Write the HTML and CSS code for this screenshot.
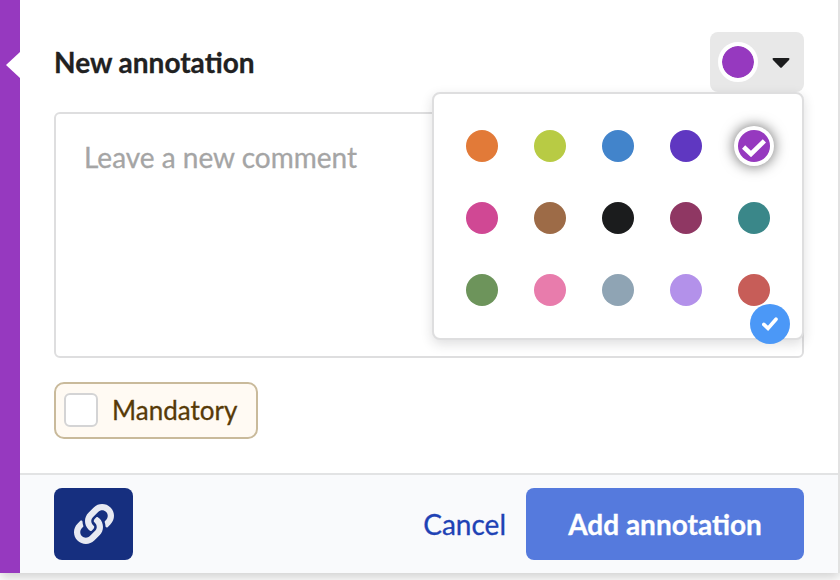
FILE: index.html
```html
<!DOCTYPE html>
<html lang="en">
<head>
<meta charset="utf-8">
<title>New annotation</title>
<link rel="stylesheet" href="styles.css">
</head>
<body>
<main class="card">
  <div class="main">
    <header class="header">
      <h1 class="title">New annotation</h1>
      <div class="picker">
        <button class="picker-toggle" aria-label="Colour">
          <span class="current"></span>
          <svg class="caret" width="18" height="10" viewBox="0 0 18 10"><path d="M1.6 0H16.4Q18.2.2 17 1.9L10 9.2Q9 10.2 8 9.2L1 1.9Q-.2.2 1.6 0Z" fill="#1b1c1d"/></svg>
        </button>
        <div class="palette">
          <span class="dot orange"></span>
          <span class="dot lime"></span>
          <span class="dot blue"></span>
          <span class="dot indigo"></span>
          <span class="dot purple selected"><svg width="24" height="18" viewBox="0 0 24 18"><path d="M1.6 8L9 15L22.4 1.8" fill="none" stroke="#fff" stroke-width="4.6"/></svg></span>
          <span class="dot magenta"></span>
          <span class="dot brown"></span>
          <span class="dot black"></span>
          <span class="dot plum"></span>
          <span class="dot teal"></span>
          <span class="dot green"></span>
          <span class="dot pink"></span>
          <span class="dot grey"></span>
          <span class="dot lilac"></span>
          <span class="dot red"></span>
        </div>
      </div>
    </header>
    <div class="comment">
      <span class="placeholder">Leave a new comment</span>
      <span class="badge"><svg width="16" height="14" viewBox="0 0 16 14"><path d="M1.8 7.4L6 11.4L14 2.2" fill="none" stroke="#fff" stroke-width="3.6" stroke-linecap="round"/></svg></span>
    </div>
    <label class="mandatory"><span class="box"></span><span class="mandatory-text">Mandatory</span></label>
  </div>
  <footer class="footer">
    <button class="link-button" aria-label="Link">
      <svg width="40" height="40" viewBox="0 0 512 512"><path fill="#e8eaf2" d="M326.612 185.391c59.747 59.809 58.927 155.698.36 214.59-.11.12-.24.25-.36.37l-67.2 67.2c-59.27 59.27-155.699 59.262-214.96 0-59.27-59.26-59.27-155.7 0-214.96l37.106-37.106c9.84-9.84 26.786-3.3 27.294 10.606.648 17.722 3.826 35.527 9.69 52.721 1.986 5.822.567 12.262-3.783 16.612l-13.087 13.087c-28.026 28.026-28.905 73.66-1.155 101.96 28.024 28.579 74.086 28.749 102.325.51l67.2-67.19c28.191-28.191 28.073-73.757 0-101.83-3.701-3.694-7.429-6.564-10.341-8.569a16.037 16.037 0 0 1-6.947-12.606c-.396-10.567 3.348-21.456 11.698-29.806l21.054-21.055c5.521-5.521 14.182-6.199 20.584-1.731a152.482 152.482 0 0 1 20.522 17.197zM467.547 44.449c-59.261-59.262-155.69-59.27-214.96 0l-67.2 67.2c-.12.12-.25.25-.36.37-58.566 58.892-59.387 154.781.36 214.59a152.454 152.454 0 0 0 20.521 17.196c6.402 4.468 15.064 3.789 20.584-1.731l21.054-21.055c8.35-8.35 12.094-19.239 11.698-29.806a16.037 16.037 0 0 0-6.947-12.606c-2.912-2.005-6.64-4.875-10.341-8.569-28.073-28.073-28.191-73.639 0-101.83l67.2-67.19c28.239-28.239 74.3-28.069 102.325.51 27.75 28.3 26.872 73.934-1.155 101.96l-13.087 13.087c-4.35 4.35-5.769 10.79-3.783 16.612 5.864 17.194 9.042 34.999 9.69 52.721.509 13.906 17.454 20.446 27.294 10.606l37.106-37.106c59.271-59.259 59.271-155.699.001-214.959z"/></svg>
    </button>
    <button class="cancel">Cancel</button>
    <button class="submit">Add annotation</button>
  </footer>
</main>
</body>
</html>
```
FILE: styles.css
```css
* { box-sizing: border-box; }

body {
  margin: 0;
  height: 580px;
  overflow: hidden;
  background: #fff;
  font-family: Lato, "Liberation Sans", sans-serif;
  color: #212121;
  -webkit-text-stroke: .3px currentColor;
}

button {
  border: 0;
  padding: 0;
  background: none;
  font: inherit;
}

svg { display: block; }

.card {
  position: relative;
  width: 840px;
  height: 573px;
  display: flex;
  flex-direction: column;
  border-left: 20px solid #9639bf;
  border-right: 2px solid #e2e2e2;
  background: #fff;
  box-shadow: 0 4px 12px rgba(0, 0, 0, .2);
}

/* notch in the coloured bar */
.card::before {
  content: "";
  position: absolute;
  left: -14px;
  top: 52px;
  border: solid transparent;
  border-width: 13.5px 14px 13.5px 0;
  border-right-color: #fff;
}

.main {
  height: 473px;
  padding: 32px 34px 0;
}

.header {
  display: flex;
  justify-content: space-between;
  height: 80px;
}

.title {
  margin: 0;
  font-size: 28px;
  font-weight: 700;
  line-height: 60px;
}

.picker {
  position: relative;
  width: 94px;
}

.picker-toggle {
  display: flex;
  align-items: center;
  gap: 14px;
  width: 94px;
  height: 60px;
  padding-left: 8px;
  border-radius: 8px;
  background: #e8e8e8;
}

.caret { margin-top: 1px; }

.current {
  width: 40px;
  height: 40px;
  border: 4px solid #fff;
  border-radius: 50%;
  background: #9639bf;
  background-clip: padding-box;
}

.palette {
  position: absolute;
  z-index: 1;
  top: 60px;
  right: 0;
  width: 372px;
  height: 248px;
  padding: 36px 32px;
  display: grid;
  grid-template-columns: repeat(5, 32px);
  column-gap: 36px;
  row-gap: 40px;
  align-content: start;
  border: 2px solid #dededf;
  border-radius: 8px;
  background: #fff;
  box-shadow: 0 4px 12px rgba(34, 36, 38, .15);
}

.dot {
  width: 32px;
  height: 32px;
  border-radius: 50%;
}

.orange { background: #e27a38; }
.lime { background: #b8cb44; }
.blue { background: #4284cb; }
.indigo { background: #5f37c1; }
.purple { background: #9639bf; }
.magenta { background: #d04894; }
.brown { background: #9d6b47; }
.black { background: #1b1c1d; }
.plum { background: #8f3763; }
.teal { background: #3a8789; }
.green { background: #6d945b; }
.pink { background: #e87cac; }
.grey { background: #8fa4b4; }
.lilac { background: #b391ea; }
.red { background: #c75d58; }

.selected {
  display: grid;
  place-items: center;
  padding-top: 4px;
  box-shadow: 0 0 0 4px #fff, 0 0 14px 4px rgba(0, 0, 0, .6);
}

.comment {
  position: relative;
  height: 246px;
  padding: 26px 28px;
  border: 2px solid #dededf;
  border-radius: 6px;
}

.placeholder {
  display: block;
  font-size: 28px;
  line-height: 34px;
  color: #a5a5a5;
}

.badge {
  position: absolute;
  z-index: 2;
  right: 12px;
  bottom: 12px;
  width: 40px;
  height: 40px;
  display: grid;
  place-items: center;
  border-radius: 50%;
  background: #4b98f7;
}

.mandatory {
  display: flex;
  align-items: center;
  width: 204px;
  height: 57px;
  margin-top: 24px;
  padding-left: 8px;
  gap: 14px;
  border: 2px solid #c9ba9b;
  border-radius: 10px;
  background: #fffaf3;
  font-size: 26px;
  color: #573a08;
}

.mandatory-text { padding-bottom: 2px; }

.box {
  width: 34px;
  height: 34px;
  margin-bottom: 1px;
  border: 2px solid #d4d4d5;
  border-radius: 6px;
  background: #fff;
}

.footer {
  display: flex;
  height: 100px;
  padding: 13px 34px;
  border-top: 2px solid #e2e3e4;
  background: #f9fafc;
}

.link-button {
  width: 79px;
  height: 72px;
  display: grid;
  place-items: center;
  border-radius: 8px;
  background: #162f7f;
}

.cancel {
  margin-left: auto;
  margin-right: 20px;
  height: 72px;
  font-size: 28px;
  color: #1e42b5;
}

.submit {
  width: 278px;
  height: 72px;
  border-radius: 8px;
  background: #557add;
  color: #fff;
  font-size: 28px;
  font-weight: 700;
}
```
